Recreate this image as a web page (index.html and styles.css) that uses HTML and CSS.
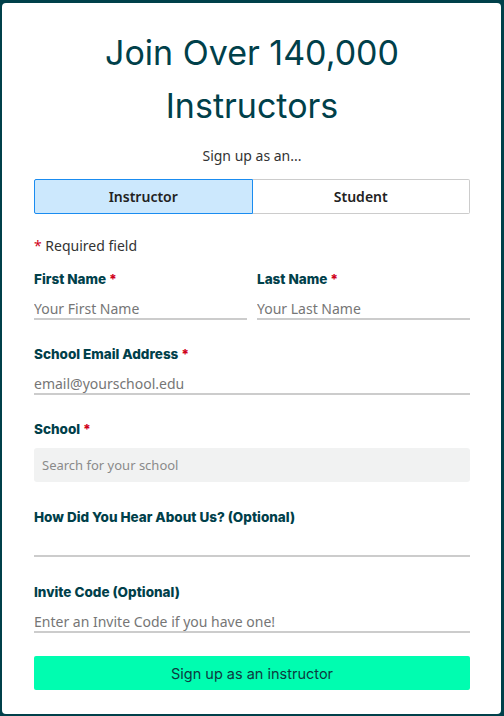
FILE: index.html
```html
<!DOCTYPE html>
<html lang="en">
<head>
<meta charset="utf-8">
<title>Join Over 140,000 Instructors</title>
<link rel="stylesheet" href="styles.css">
</head>
<body>
<div class="card">
  <h1 class="title">Join Over 140,000<br>Instructors</h1>
  <p class="subtitle">Sign up as an...</p>
  <div class="segmented">
    <button class="seg seg-active" type="button">Instructor</button>
    <button class="seg" type="button">Student</button>
  </div>
  <p class="required-note"><span class="star">*</span> Required field</p>
  <form class="form">
    <div class="row">
      <div class="field">
        <label class="label">First Name <span class="star">*</span></label>
        <input class="line-input" type="text" placeholder="Your First Name">
      </div>
      <div class="field">
        <label class="label">Last Name <span class="star">*</span></label>
        <input class="line-input" type="text" placeholder="Your Last Name">
      </div>
    </div>
    <div class="field">
      <label class="label">School Email Address <span class="star">*</span></label>
      <input class="line-input" type="text" placeholder="email@yourschool.edu">
    </div>
    <div class="field">
      <label class="label">School <span class="star">*</span></label>
      <input class="search-input" type="text" placeholder="Search for your school">
    </div>
    <div class="field field-hear">
      <label class="label">How Did You Hear About Us? (Optional)</label>
      <div class="line-select"></div>
    </div>
    <div class="field field-invite">
      <label class="label">Invite Code (Optional)</label>
      <input class="line-input" type="text" placeholder="Enter an Invite Code if you have one!">
    </div>
    <button class="submit" type="button">Sign up as an instructor</button>
  </form>
</div>
</body>
</html>
```
FILE: styles.css
```css
* { box-sizing: border-box; }
html, body { margin: 0; padding: 0; }
body {
  background: #00404a;
  width: 504px;
  height: 716px;
  overflow: hidden;
  padding: 3px 3px 2px 2px;
  font-family: "Noto Sans", "Open Sans", sans-serif;
}
.card {
  background: #ffffff;
  border-radius: 4px;
  height: 711px;
  padding: 23px 31px 0 32px;
  display: flex;
  flex-direction: column;
}
.title {
  margin: 0;
  text-align: center;
  font-family: "Inter", "Lato", sans-serif;
  font-weight: 400;
  font-size: 34px;
  line-height: 53px;
  color: #00404a;
}
.subtitle {
  margin: 14px 0 0;
  text-align: center;
  font-size: 14px;
  line-height: 20px;
  color: #333333;
}
.segmented {
  margin-top: 13px;
  display: flex;
  height: 35px;
}
.seg {
  flex: 1;
  margin: 0;
  font-family: "Noto Sans", sans-serif;
  font-weight: 600;
  font-size: 14px;
  color: #222222;
  background: #ffffff;
  border: 1px solid #cccccc;
  border-left: none;
  border-radius: 0 2px 2px 0;
  padding: 0;
}
.seg-active {
  background: #cce8fd;
  border: 1px solid #1a8cf0;
  border-radius: 2px 0 0 2px;
}
.required-note {
  margin: 22px 0 0;
  font-size: 14px;
  line-height: 20px;
  color: #333333;
}
.star { color: #d0021b; }
.form {
  margin-top: 13px;
  display: flex;
  flex-direction: column;
}
.row {
  display: flex;
  gap: 10px;
}
.row .field { flex: 1; margin-top: 0; }
.field {
  display: flex;
  flex-direction: column;
  margin-top: 24px;
}
.label {
  font-family: "Inter", "Lato", sans-serif;
  font-weight: 800;
  font-size: 13.5px;
  line-height: 20px;
  color: #00404a;
}
.line-input {
  font-family: "Noto Sans", sans-serif;
  font-size: 14px;
  line-height: 20px;
  height: 31px;
  padding: 9px 0 0;
  border: none;
  border-bottom: 2px solid #cccccc;
  color: #333333;
  background: transparent;
  outline: none;
  width: 100%;
}
.line-input::placeholder { color: #767676; }
.search-input {
  margin-top: 9px;
  height: 34px;
  border: none;
  border-radius: 3px;
  background: #f1f2f2;
  padding: 0 8px;
  font-family: "Noto Sans", sans-serif;
  font-size: 13px;
  color: #333333;
  outline: none;
  width: 100%;
}
.search-input::placeholder { color: #8a8a8a; }
.field-hear { margin-top: 25px; }
.line-select {
  height: 30px;
  border-bottom: 2px solid #cccccc;
}
.field-invite { margin-top: 25px; }
.submit {
  margin-top: 23px;
  height: 34px;
  border: none;
  border-radius: 2px;
  background: #00fdb0;
  font-family: "Inter", "Lato", sans-serif;
  font-size: 14.5px;
  color: #0d3a40;
  width: 100%;
}
```
